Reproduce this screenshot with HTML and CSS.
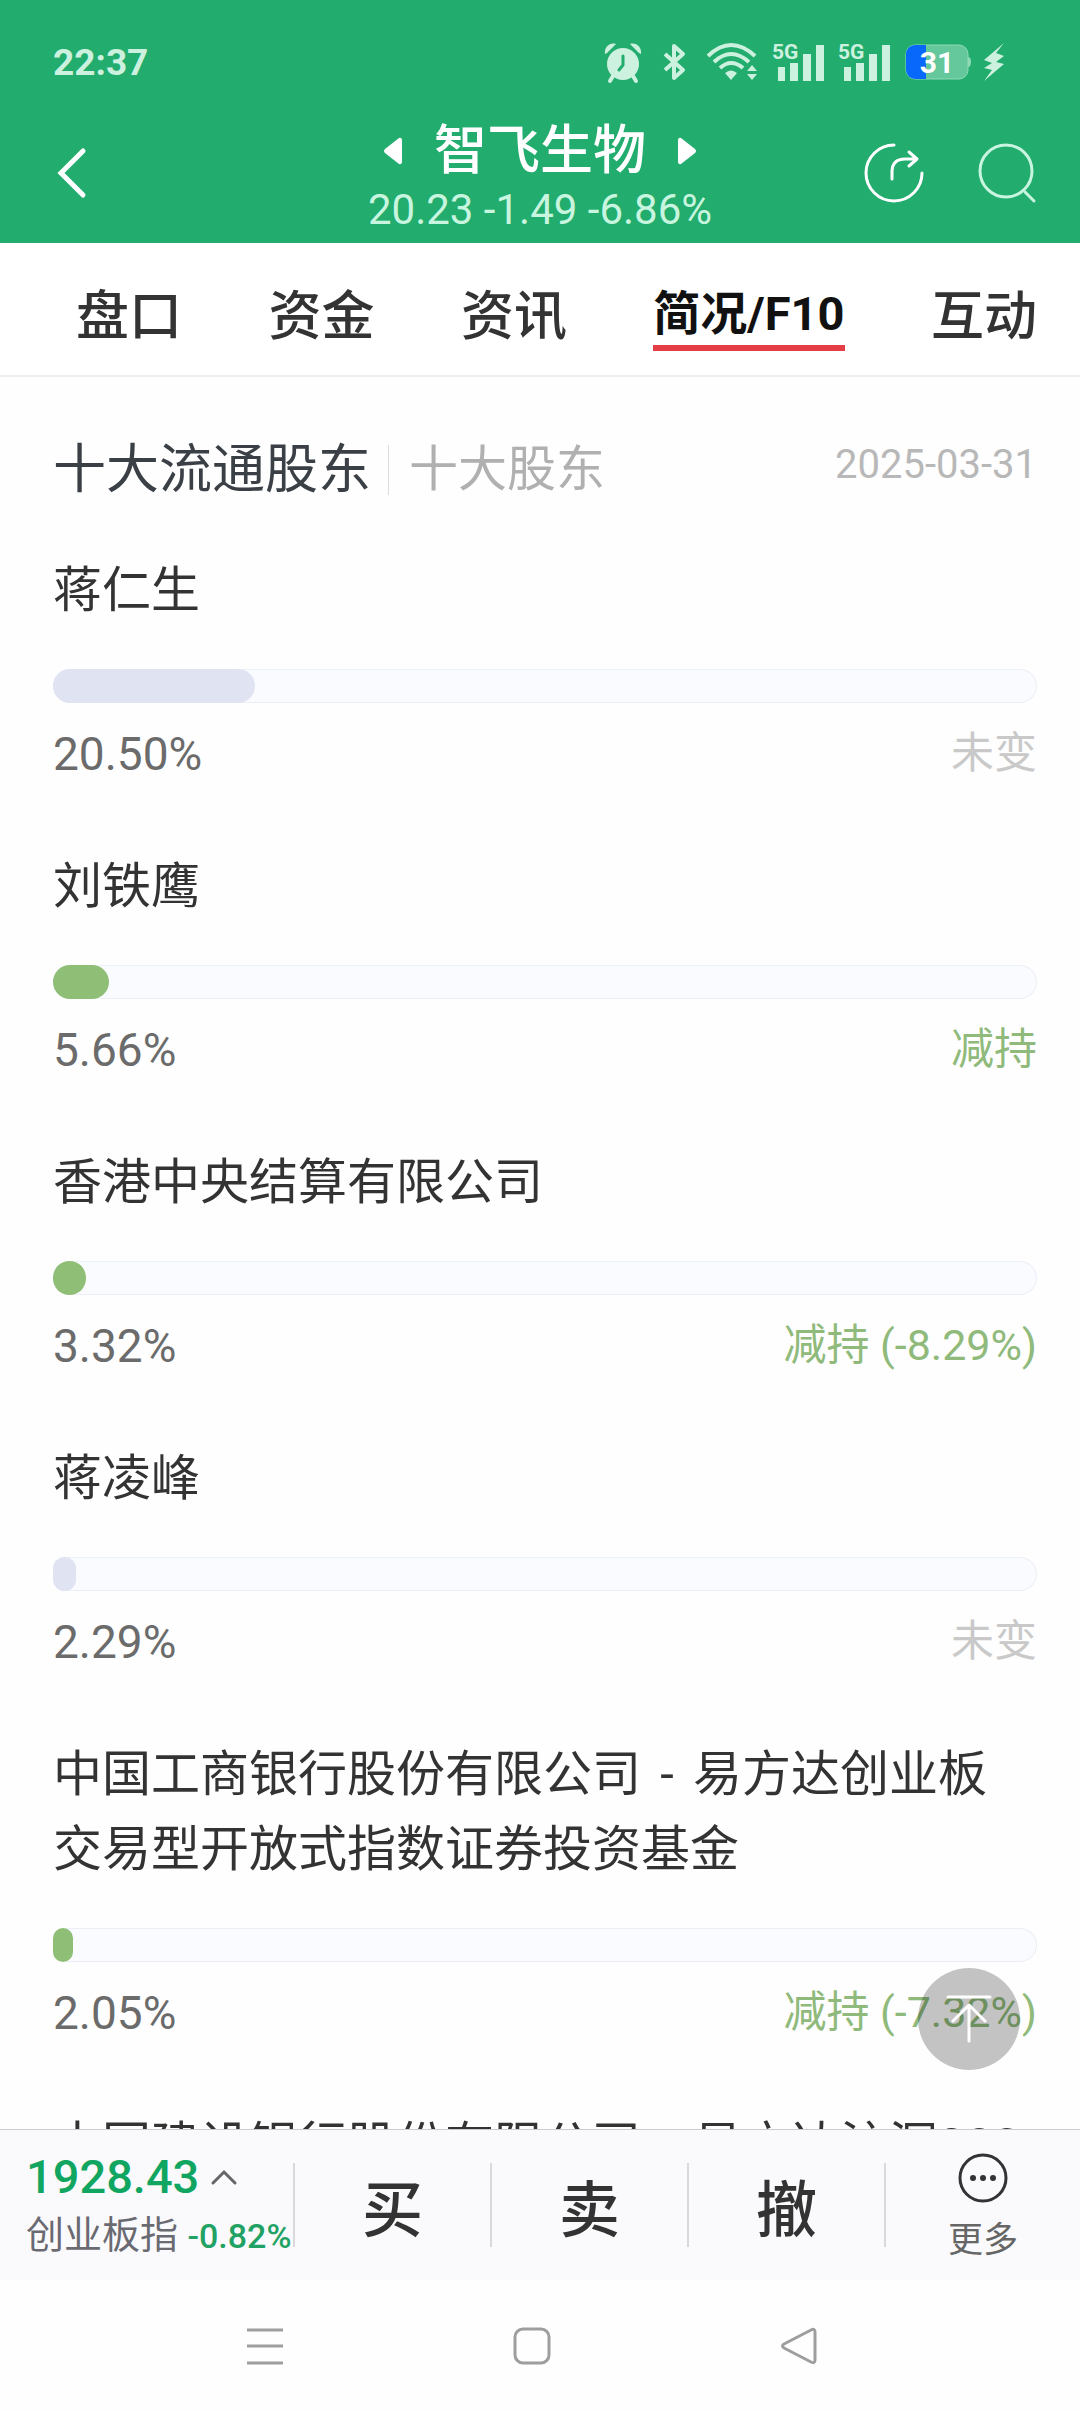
FILE: index.html
```html
<!DOCTYPE html>
<html lang="zh-CN">
<head>
  <meta charset="utf-8">
  <meta name="viewport" content="width=device-width, initial-scale=1">
  <title>智飞生物</title>
  <link rel="stylesheet" href="styles.css">
</head>
<body>

  <header class="header">
    <div class="status-bar">
      <span class="clock">22:37</span>
      <div class="status-icons">
        <!-- alarm -->
        <svg width="38" height="40" viewBox="0 0 38 40" fill="currentColor">
          <circle cx="19" cy="22" r="16"/>
          <path d="M1 12C0 5 6 0 12 2L3 11zM37 12C38 5 32 0 26 2L35 11z"/>
          <path d="M9 34l-3 5M29 34l3 5" stroke="currentColor" stroke-width="4" stroke-linecap="round"/>
          <path d="M19 14v9l-4 5" fill="none" stroke="#22ac6e" stroke-width="3" stroke-linecap="round"/>
        </svg>
        <!-- bluetooth -->
        <svg class="bluetooth" width="24" height="40" viewBox="0 0 24 40" fill="none" stroke="currentColor" stroke-width="4" stroke-linejoin="round">
          <path d="M3 12l18 16-9 8V4l9 8L3 28"/>
        </svg>
        <!-- wifi -->
        <svg class="wifi" width="52" height="40" viewBox="0 0 52 40" fill="none" stroke="currentColor" stroke-width="4">
          <path d="M2 14Q25 -8 49 14M8 20Q25 4 43 20M14 26Q25 16 37 26"/>
          <path d="M19 31q6-5 12 0l-6 7z" fill="currentColor" stroke="none"/>
          <path d="M41 29l5-6 5 6zM41 32l5 6 5-6z" fill="currentColor" stroke="none"/>
        </svg>
        <!-- signal, SIM 1 and SIM 2 -->
        <svg class="signal" width="52" height="40" viewBox="0 0 52 40" fill="currentColor">
          <text class="network" x="0" y="17">5G</text>
          <path d="M6 25h7v14H6zM18 21h8v18h-8zM31 12h8v27h-8zM44 3h8v36h-8z"/>
        </svg>
        <svg class="signal" width="52" height="40" viewBox="0 0 52 40" fill="currentColor">
          <text class="network" x="0" y="17">5G</text>
          <path d="M6 25h7v14H6zM18 21h8v18h-8zM31 12h8v27h-8zM44 3h8v36h-8z"/>
        </svg>
        <!-- battery -->
        <svg class="battery" width="66" height="36" viewBox="0 0 66 36">
          <rect x="1" y="1" width="62" height="34" rx="9" fill="#65c79c" stroke="#8edab7"/>
          <path d="M63 13q3 0 3 5t-3 5z" fill="#8edab7"/>
          <path d="M21 1H10a9 9 0 0 0-9 9v16a9 9 0 0 0 9 9h11z" fill="#0868fc"/>
          <text class="charge" x="32" y="29" text-anchor="middle">31</text>
        </svg>
        <!-- charging -->
        <svg width="22" height="38" viewBox="0 0 22 38" fill="currentColor">
          <path d="M21 0L1 17l8 3-8 5 8 2-8 11 20-17-8-2 8-6-8-3z"/>
        </svg>
      </div>
    </div>

    <div class="title-bar">
      <button class="icon-button back" aria-label="返回">
        <svg width="30" height="52" viewBox="0 0 30 52" fill="none" stroke="currentColor" stroke-width="5" stroke-linecap="round">
          <path d="M27 4L5 26l22 22"/>
        </svg>
      </button>
      <div class="stock">
        <div class="stock-name">
          <button class="icon-button" aria-label="上一只">
            <svg width="18" height="28" viewBox="0 0 18 28" fill="currentColor"><path d="M15 1q3-1 3 3v20q0 4-3 3L1 16q-2-2 0-4z"/></svg>
          </button>
          <h1>智飞生物</h1>
          <button class="icon-button" aria-label="下一只">
            <svg width="18" height="28" viewBox="0 0 18 28" fill="currentColor"><path d="M3 1Q0 0 0 4v20q0 4 3 3l14-11q2-2 0-4z"/></svg>
          </button>
        </div>
        <div class="stock-price">20.23 -1.49 -6.86%</div>
      </div>
      <div class="title-actions">
        <button class="icon-button" aria-label="分享">
          <svg width="60" height="60" viewBox="0 0 60 60" fill="none" stroke="currentColor" stroke-width="3" stroke-linecap="round" stroke-linejoin="round">
            <path d="M30 2A28 28 0 1 0 58 30"/>
            <path d="M28 36v-7q0-13 13-13h12M45 9l8 7-8 7"/>
          </svg>
        </button>
        <button class="icon-button search" aria-label="搜索">
          <svg width="60" height="60" viewBox="0 0 60 60" fill="none" stroke="currentColor" stroke-width="3" stroke-linecap="round">
            <circle cx="29" cy="28" r="26"/>
            <path d="M48 49l9 9"/>
          </svg>
        </button>
      </div>
    </div>
  </header>

  <nav class="tabs">
    <a href="#">盘口</a>
    <a href="#">资金</a>
    <a href="#">资讯</a>
    <a href="#" class="active">简况/F10</a>
    <a href="#">互动</a>
  </nav>

  <main class="content">
    <div class="section-head">
      <button class="section-tab active">十大流通股东</button>
      <button class="section-tab">十大股东</button>
      <span class="date">2025-03-31</span>
    </div>

    <section class="holder">
      <h2>蒋仁生</h2>
      <div class="track"><div class="fill same" style="width: 20.50%"></div></div>
      <div class="meta"><span>20.50%</span><span class="change same">未变</span></div>
    </section>

    <section class="holder">
      <h2>刘铁鹰</h2>
      <div class="track"><div class="fill down" style="width: 5.66%"></div></div>
      <div class="meta"><span>5.66%</span><span class="change down">减持</span></div>
    </section>

    <section class="holder">
      <h2>香港中央结算有限公司</h2>
      <div class="track"><div class="fill down" style="width: 3.32%"></div></div>
      <div class="meta"><span>3.32%</span><span class="change down">减持 (-8.29%)</span></div>
    </section>

    <section class="holder">
      <h2>蒋凌峰</h2>
      <div class="track"><div class="fill same" style="width: 2.29%"></div></div>
      <div class="meta"><span>2.29%</span><span class="change same">未变</span></div>
    </section>

    <section class="holder">
      <h2>中国工商银行股份有限公司<span class="dash"> - </span>易方达创业板交易型开放式指数证券投资基金</h2>
      <div class="track"><div class="fill down" style="width: 2.05%"></div></div>
      <div class="meta"><span>2.05%</span><span class="change down">减持 (-7.32%)</span></div>
    </section>

    <section class="holder">
      <h2>中国建设银行股份有限公司<span class="dash"> - </span>易方达沪深300</h2>
    </section>
  </main>

  <footer class="trade-bar">
    <button class="to-top" aria-label="回到顶部">
      <svg width="48" height="50" viewBox="0 0 48 50" fill="none" stroke="currentColor" stroke-width="3" stroke-linecap="round" stroke-linejoin="round">
        <path d="M3 3h42M24 11v36M8 27l16-16 16 16"/>
      </svg>
    </button>
    <button class="index">
      <span class="index-value">1928.43
        <svg width="26" height="16" viewBox="0 0 26 16" fill="none" stroke="currentColor" stroke-width="3" stroke-linecap="round">
          <path d="M2 14L13 3l11 11"/>
        </svg>
      </span>
      <span class="index-name">创业板指 <span class="index-change">-0.82%</span></span>
    </button>
    <button class="trade">买</button>
    <button class="trade">卖</button>
    <button class="trade">撤</button>
    <button class="trade more">
      <svg width="52" height="52" viewBox="0 0 52 52" fill="currentColor">
        <circle cx="26" cy="26" r="23" fill="none" stroke="currentColor" stroke-width="3"/>
        <circle cx="16" cy="26" r="3"/><circle cx="26" cy="26" r="3"/><circle cx="36" cy="26" r="3"/>
      </svg>
      <span>更多</span>
    </button>
  </footer>

  <div class="system-nav">
    <button class="icon-button" aria-label="最近任务">
      <svg width="38" height="38" viewBox="0 0 38 38" fill="none" stroke="currentColor" stroke-width="3"><path d="M1 3h36M1 19h36M1 36h36"/></svg>
    </button>
    <button class="icon-button" aria-label="主屏幕">
      <svg width="38" height="38" viewBox="0 0 38 38" fill="none" stroke="currentColor" stroke-width="3"><rect x="2" y="2" width="34" height="34" rx="8"/></svg>
    </button>
    <button class="icon-button" aria-label="返回">
      <svg width="38" height="38" viewBox="0 0 38 38" fill="none" stroke="currentColor" stroke-width="3" stroke-linejoin="round"><path d="M31 3Q35 1 35 5v28q0 4-4 2L4 21q-3-2 0-4z"/></svg>
    </button>
  </div>

</body>
</html>
```

FILE: styles.css
```css
* {
  box-sizing: border-box;
}
body {
  margin: 0;
  height: 100vh;
  display: flex;
  flex-direction: column;
  font-family: Roboto, "Noto Sans CJK SC", sans-serif;
  color: #333;
  background-color: #fefefe;
}
svg {
  display: block;
  flex: none;
  overflow: visible;
}
button {
  padding: 0;
  border: none;
  background: none;
  font: inherit;
  color: inherit;
  cursor: pointer;
}
h1, h2 {
  margin: 0;
  font-weight: 400;
}

/* header */
.header {
  background-color: #22ac6e;
  color: #fff;
}
.status-bar {
  display: flex;
  justify-content: space-between;
  align-items: center;
  height: 84px;
  padding: 40px 75px 0 53px;
  color: #cdf1df;
}
.clock {
  font-size: 37px;
  font-weight: 700;
}
.status-icons {
  display: flex;
  align-items: center;
}
.bluetooth {
  margin-left: 20px;
}
.wifi {
  margin-left: 20px;
}
.signal {
  margin-left: 14px;
}
.battery {
  margin: 0 12px 0 15px;
}
.network {
  font-size: 21px;
  font-weight: 700;
}
.charge {
  font-size: 30px;
  font-weight: 700;
  fill: #fff;
}
.title-bar {
  display: grid;
  grid-template-columns: 1fr auto 1fr;
  align-items: center;
  height: 159px;
  padding: 20px 43px 2px;
}
.back {
  justify-self: start;
  margin-left: 13px;
}
.stock {
  padding-top: 6px;
}
.stock-name {
  display: flex;
  align-items: center;
  justify-content: center;
  gap: 32px;
}
.stock-name h1 {
  font-size: 53px;
  line-height: 68px;
  font-weight: 500;
}
.stock-price {
  font-size: 42px;
  line-height: 50px;
  text-align: center;
  color: #c8f5df;
}
.title-actions {
  justify-self: end;
  display: flex;
  gap: 53px;
}
.search {
  color: #c8f5df;
}

/* tabs */
.tabs {
  display: flex;
  justify-content: space-between;
  align-items: center;
  height: 134px;
  padding: 16px 43px 0 76px;
  border-bottom: 2px solid #eceff2;
  background-color: #fff;
}
.tabs a {
  font-size: 53px;
  font-weight: 500;
  line-height: 74px;
  color: #333;
  text-decoration: none;
}
.tabs .active {
  font-size: 47px;
  font-weight: 700;
  line-height: 62px;
  color: #111;
  border-bottom: 6px solid #e63e47;
}

/* shareholder list */
.content {
  flex: 1;
  min-height: 0;
  overflow: hidden;
  padding: 54px 43px 0 53px;
}
.section-head {
  display: flex;
  align-items: center;
  height: 78px;
  margin-bottom: 44px;
}
.section-tab {
  font-size: 49px;
  line-height: 50px;
  color: #b0b0b0;
}
.section-tab.active {
  font-size: 53px;
  color: #3b4046;
}
.section-tab + .section-tab {
  margin-left: 17px;
  padding-left: 20px;
  border-left: 1px solid #ddd;
}
.date {
  margin-left: auto;
  padding-bottom: 12px;
  font-size: 40px;
  color: #b8b8b8;
}
.holder {
  margin-bottom: 68px;
}
.holder h2 {
  padding-right: 10px;
  font-size: 49px;
  line-height: 75px;
}
.dash {
  margin: 0 7px;
}
.track {
  height: 34px;
  margin-top: 41px;
  border-radius: 17px;
  background-color: #fafbff;
  box-shadow: inset 0 0 0 1px #eceff6;
}
.fill {
  height: 100%;
  border-radius: 17px;
}
.fill.same {
  background-color: #e0e4f2;
}
.fill.down {
  background-color: #8fbe76;
}
.meta {
  display: flex;
  justify-content: space-between;
  align-items: center;
  height: 54px;
  margin-top: 24px;
  font-size: 46px;
  line-height: 46px;
  color: #6b6b6b;
}
.change {
  padding-bottom: 2px;
  font-size: 43px;
}
.change.same {
  color: #c9c9c9;
}
.change.down {
  color: #8fba7b;
}

/* bottom bar */
.trade-bar {
  position: relative;
  display: grid;
  grid-template-columns: 293fr 197fr 197fr 197fr 196fr;
  align-items: center;
  height: 151px;
  border-top: 1px solid #ccc;
  background-color: #fafafc;
}
.to-top {
  position: absolute;
  right: 60px;
  bottom: 210px;
  width: 102px;
  height: 102px;
  display: flex;
  align-items: center;
  justify-content: center;
  border-radius: 50%;
  background-color: rgba(0, 0, 0, 0.23);
  color: #fff;
}
.index {
  padding-left: 26px;
  text-align: left;
  white-space: nowrap;
}
.index-value {
  display: flex;
  align-items: center;
  gap: 12px;
  font-size: 47px;
  font-weight: 500;
  line-height: 60px;
  color: #10a560;
}
.index-value svg {
  color: #666;
}
.index-name {
  display: block;
  font-size: 38px;
  line-height: 56px;
  color: #6a6a72;
}
.index-change {
  font-size: 34px;
  font-weight: 500;
  color: #1fa263;
}
.trade {
  height: 84px;
  padding-top: 12px;
  border-left: 2px solid #d9d9dc;
  font-size: 61px;
  font-weight: 500;
  line-height: 72px;
}
.more {
  display: flex;
  flex-direction: column;
  align-items: center;
  justify-content: center;
  padding-top: 8px;
  font-size: 35px;
  font-weight: 400;
  line-height: 50px;
}
.more span {
  margin-top: 12px;
  color: #666;
}

/* system navigation */
.system-nav {
  display: flex;
  justify-content: center;
  gap: 229px;
  height: 132px;
  padding-right: 16px;
  color: #9e9e9e;
  background-color: #fefefe;
}
```
